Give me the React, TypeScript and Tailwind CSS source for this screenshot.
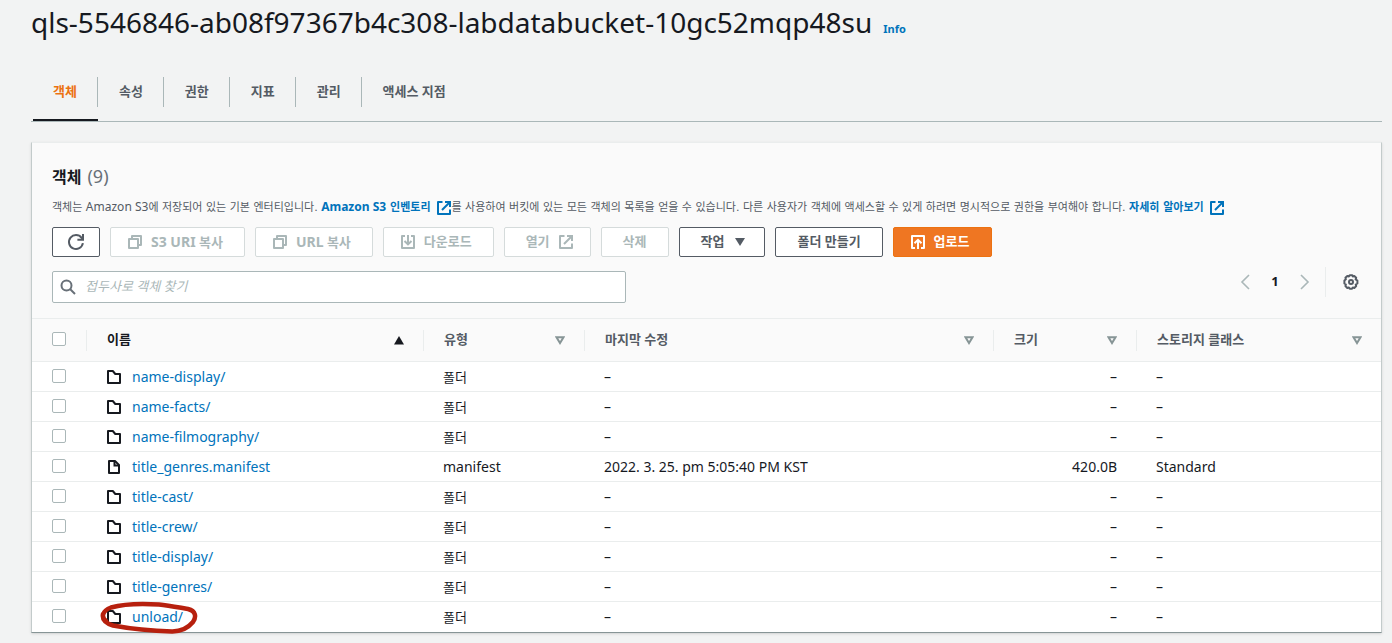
import type { ReactNode } from "react";

const OUTLINE = "border-[#545b64] text-[#545b64]";
const DISABLED = "border-[#d5dbdb] text-[#aab7b8]";
const PRIMARY = "border-[#ec7211] bg-[#ef7622] text-white";

type IconProps = { children: ReactNode; className?: string };

function Icon({ children, className = "" }: IconProps) {
  return (
    <svg
      viewBox="0 0 16 16"
      className={`size-4 shrink-0 ${className}`}
      fill="none"
      stroke="currentColor"
      strokeWidth="2"
      aria-hidden="true"
    >
      {children}
    </svg>
  );
}

const RefreshIcon = () => (
  <svg viewBox="0 0 18 18" className="size-[18px]" fill="none" stroke="currentColor" strokeWidth="2" aria-hidden="true">
    <path d="M15.9 10.2A7 7 0 1 1 14.6 4.8L16 6.2" />
    <path d="M16 1v5.8h-5.6" />
  </svg>
);

const CopyIcon = () => (
  <Icon>
    <path d="M2 5h9v9H2z" strokeLinejoin="round" />
    <path d="M5 5V2h9v9h-3" strokeLinejoin="round" />
  </Icon>
);

const DownloadIcon = () => (
  <Icon>
    <path d="M5 2H2v12h12V2h-3" strokeLinejoin="round" />
    <path d="M8 1v9M4.5 7 8 10.4 11.500 7" />
  </Icon>
);

const UploadIcon = () => (
  <Icon>
    <path d="M5 14H2V2h12v12h-3" strokeLinejoin="round" />
    <path d="M8 15V6M4.500 9.300 8 5.800l3.500 3.500" />
  </Icon>
);

const ExternalIcon = ({ className = "" }: { className?: string }) => (
  <Icon className={className}>
    <path d="M6.500 2H2v12h12V9.500" strokeLinejoin="round" />
    <path d="M9 2h5v5M14 2 6 10" />
  </Icon>
);

const FolderIcon = () => (
  <Icon>
    <path d="M2 13.900V2h4.800l2.500 3H14v8.900z" strokeLinejoin="round" />
  </Icon>
);

const FileIcon = () => (
  <Icon>
    <path d="M3 2h6l4 4v8H3z" strokeLinejoin="round" />
    <path d="M8.500 2v4.500H13" />
  </Icon>
);

const GearIcon = () => (
  <svg viewBox="0 0 16 16" className="size-4" fill="none" stroke="currentColor" strokeWidth="2" aria-hidden="true">
    <path
      d="M6.700 1.200h2.600l.5 1.300 1.500-.5 1.900 1.800-.6 1.500 1.800 1.200v3l-1.700 1 .5 1.600-1.900 1.900-1.500-.5-1 1.300H6.700l-.8-1.300-1.600.5-1.900-1.900.5-1.600-1.500-1v-3l1.500-1.200-.5-1.500L4.300 2l1.600.5z"
      strokeLinejoin="round"
    />
    <circle cx="8" cy="8" r="2" />
  </svg>
);

type ButtonProps = { children: ReactNode; tone: string; pad: string; label?: string; disabled?: boolean };

function Button({ children, tone, pad, label, disabled }: ButtonProps) {
  return (
    <button
      type="button"
      aria-label={label}
      disabled={disabled}
      className={`flex h-[30px] items-center gap-2 rounded-xs border text-[13px] font-bold whitespace-nowrap ${
        tone === PRIMARY ? "" : "bg-white"
      } ${tone} ${pad}`}
    >
      {children}
    </button>
  );
}

const tabs = ["객체", "속성", "권한", "지표", "관리", "액세스 지점"];

const columns = [
  { name: "이름", sorted: true },
  { name: "유형" },
  { name: "마지막 수정" },
  { name: "크기" },
  { name: "스토리지 클래스" },
];

type Row = { name: string; type: string; modified: string; size: string; storage: string };

const folder = (name: string): Row => ({ name, type: "폴더", modified: "–", size: "–", storage: "–" });

const rows: Row[] = [
  folder("name-display/"),
  folder("name-facts/"),
  folder("name-filmography/"),
  {
    name: "title_genres.manifest",
    type: "manifest",
    modified: "2022. 3. 25. pm 5:05:40 PM KST",
    size: "420.0B",
    storage: "Standard",
  },
  folder("title-cast/"),
  folder("title-crew/"),
  folder("title-display/"),
  folder("title-genres/"),
  folder("unload/"),
];

function Checkbox({ label }: { label: string }) {
  return (
    <input
      type="checkbox"
      aria-label={label}
      className="block size-[14px] appearance-none rounded-xs border border-[#aab7b8] bg-white checked:bg-[#0073bb]"
    />
  );
}

function SortIcon({ sorted }: { sorted?: boolean }) {
  return (
    <svg viewBox="0 0 10 9" className="h-[9px] w-[10px]" aria-hidden="true">
      {sorted ? (
        <path d="M5 0 10 8.500H0z" fill="#16191f" />
      ) : (
        <path d="M1.500 1.200h7L5 7z" fill="none" stroke="#879596" strokeWidth="2" />
      )}
    </svg>
  );
}

function Highlight() {
  return (
    <svg
      viewBox="0 0 100 36"
      className="pointer-events-none absolute -top-2 -left-[7px] h-9 w-[100px]"
      fill="none"
      stroke="#b7200e"
      strokeWidth="4.500"
      strokeLinecap="round"
      aria-hidden="true"
    >
      <path d="M7 22C2 18 3 12 12 8.500C28 4 45 4.500 60 5.500C70 6.500 80 8.500 89 10C97 12 97.500 18 94 23C89 29 82 32.500 73 32.400C55 32 30 29.500 14 26.500C6 24 3 20 4 15" />
    </svg>
  );
}

function Latin({ children }: { children: ReactNode }) {
  return <span className="font-['Noto_Sans',sans-serif] text-[12px]">{children}</span>;
}

export default function App() {
  return (
    <div className="min-h-screen bg-[#f2f3f3] pr-[10px] pb-[10px] pl-[31px] font-['Noto_Sans','Noto_Sans_CJK_KR',sans-serif] text-[#16191f]">
      <header className="flex items-baseline gap-[11px] pt-1">
        <h1 className="text-[28px] leading-9">qls-5546846-ab08f97367b4c308-labdatabucket-10gc52mqp48su</h1>
        <a href="#info" className="text-[11px] font-bold text-[#0073bb]">
          Info
        </a>
      </header>

      <nav className="mt-[37px] flex border-b border-[#aab7b8] pl-[2px]">
        {tabs.map((tab, i) => (
          <a
            key={tab}
            href="#tab"
            className={`flex h-11 border-b-2 text-[13px] font-bold ${
              i === 0 ? "border-[#16191f] text-[#ec7211]" : "border-transparent text-[#545b64]"
            }`}
          >
            <span
              className={`flex h-[30px] items-center border-[#aab7b8] pr-5 ${i === 0 ? "pl-5" : "pl-[21px]"} ${
                i < tabs.length - 1 ? "border-r" : ""
              }`}
            >
              {tab}
            </span>
          </a>
        ))}
      </nav>

      <main className="mt-5 border border-t-[#eaeded] border-r-[#c3cbcb] border-b-[#879596] border-l-[#c3cbcb] bg-white shadow-sm">
        <section className="bg-[#fafafa] px-5 pt-[21px] pb-[15px]">
          <h2 className="flex items-baseline gap-[6px] text-[16px] leading-6 font-bold">
            객체 <span className="text-[18px] font-normal text-[#687078]">(9)</span>
          </h2>
          <p className="mt-2 flex items-center font-['DejaVu_Sans','Noto_Sans_CJK_KR',sans-serif] text-[11px] leading-5 whitespace-pre text-[#545b64]">
            <span>
              객체는 <Latin>Amazon S3</Latin>에 저장되어 있는 기본 엔터티입니다.{" "}
            </span>
            <a href="#inventory" className="flex items-center gap-[5px] font-bold text-[#0073bb]">
              <span>
                <Latin>Amazon S3</Latin> 인벤토리
              </span>
              <ExternalIcon />
            </a>
            를 사용하여 버킷에 있는 모든 객체의 목록을 얻을 수 있습니다. 다른 사용자가 객체에 액세스할 수 있게 하려면
            명시적으로 권한을 부여해야 합니다.{" "}
            <a href="#more" className="flex items-center gap-[5px] font-bold text-[#0073bb]">
              자세히 알아보기
              <ExternalIcon />
            </a>
          </p>

          <div className="mt-[9px] flex gap-[10px]">
            <Button tone={OUTLINE} pad="px-[14px]" label="새로 고침">
              <RefreshIcon />
            </Button>
            <Button tone={DISABLED} pad="pl-4 pr-[21px]" disabled>
              <CopyIcon />
              <span>
                <span className="text-[14px]">S3 URI</span> 복사
              </span>
            </Button>
            <Button tone={DISABLED} pad="pl-4 pr-[21px]" disabled>
              <CopyIcon />
              <span>
                <span className="text-[14px]">URL</span> 복사
              </span>
            </Button>
            <Button tone={DISABLED} pad="pl-4 pr-[21px]" disabled>
              <DownloadIcon />
              다운로드
            </Button>
            <Button tone={DISABLED} pad="pl-[21px] pr-4" disabled>
              열기
              <ExternalIcon />
            </Button>
            <Button tone={DISABLED} pad="px-[21px]" disabled>
              삭제
            </Button>
            <Button tone={OUTLINE} pad="pl-[21px] pr-4">
              작업
              <svg viewBox="0 0 16 16" className="size-4" aria-hidden="true">
                <path d="M3 4h10L8 12z" fill="currentColor" />
              </svg>
            </Button>
            <Button tone={OUTLINE} pad="px-[21px]">
              폴더 만들기
            </Button>
            <Button tone={PRIMARY} pad="pl-4 pr-[21px]">
              <UploadIcon />
              업로드
            </Button>
          </div>

          <div className="mt-[14px] flex items-start justify-between">
            <label className="flex h-8 w-[574px] items-center gap-[9px] rounded-xs border border-[#aab7b8] bg-white px-[7px]">
              <Icon className="text-[#687078]">
                <circle cx="6.500" cy="6.500" r="5" />
                <path d="m10 10 5 5" />
              </Icon>
              <input
                type="search"
                aria-label="접두사로 객체 찾기"
                placeholder="접두사로 객체 찾기"
                className="min-w-0 flex-1 bg-transparent text-[13px] outline-none placeholder:text-[#aab7b8] placeholder:italic"
              />
            </label>
            <div className="-mt-1 flex h-[30px] items-center">
              <button type="button" aria-label="이전 페이지" className="text-[#aab7b8]">
                <Icon>
                  <path d="M12 1 5 8l7 7" strokeWidth="1.600" />
                </Icon>
              </button>
              <button type="button" className="w-11 text-[13px] font-bold">
                1
              </button>
              <button type="button" aria-label="다음 페이지" className="text-[#aab7b8]">
                <Icon>
                  <path d="m4 1 7 7-7 7" strokeWidth="1.600" />
                </Icon>
              </button>
              <span className="ml-3 h-[30px] border-l border-[#eaeded]" />
              <button type="button" aria-label="기본 설정" className="mr-[2px] ml-[17px] text-[#545b64]">
                <GearIcon />
              </button>
            </div>
          </div>
        </section>

        <table className="w-full table-fixed border-separate border-spacing-0 text-left">
          <colgroup>
            <col className="w-[55px]" />
            <col className="w-[337px]" />
            <col className="w-[161px]" />
            <col className="w-[409px]" />
            <col className="w-[143px]" />
            <col />
          </colgroup>
          <thead className="bg-[#fafafa] text-[13px] text-[#545b64]">
            <tr className="h-11">
              <th className="border-y border-[#eaeded] p-0">
                <div className="flex h-[21px] items-center border-r border-[#eaeded] pb-[3px] pl-5">
                  <Checkbox label="모두 선택" />
                </div>
              </th>
              {columns.map((column, i) => (
                <th key={column.name} className="border-y border-[#eaeded] p-0">
                  <div
                    className={`flex h-[21px] items-center justify-between border-[#eaeded] pr-[19px] pl-5 ${
                      i < columns.length - 1 ? "border-r" : ""
                    } ${column.sorted ? "text-[#16191f]" : ""}`}
                  >
                    {column.name}
                    <SortIcon sorted={column.sorted} />
                  </div>
                </th>
              ))}
            </tr>
          </thead>
          <tbody className="text-[14px] leading-5 [&_td]:border-b [&_td]:border-[#eaeded] [&_td]:py-0 [&>tr:last-child>td]:border-b-0">
            {rows.map((row) => (
              <tr key={row.name} className="h-[30px]">
                <td className="pr-0 pl-5">
                  <div className="pb-[2px]">
                    <Checkbox label={row.name} />
                  </div>
                </td>
                <td className="pr-0 pl-[19px]">
                  <div className="relative flex items-center gap-[10px]">
                    {row.type === "폴더" ? <FolderIcon /> : <FileIcon />}
                    <a href="#object" className="text-[#0073bb]">
                      {row.name}
                    </a>
                    {row.name === "unload/" && <Highlight />}
                  </div>
                </td>
                <td className={`pl-[19px] ${row.type === "폴더" ? "text-[13px]" : ""}`}>{row.type}</td>
                <td className="pl-[19px]">{row.modified}</td>
                <td className="pr-5 text-right">{row.size}</td>
                <td className="pl-[19px]">{row.storage}</td>
              </tr>
            ))}
          </tbody>
        </table>
      </main>
    </div>
  );
}
